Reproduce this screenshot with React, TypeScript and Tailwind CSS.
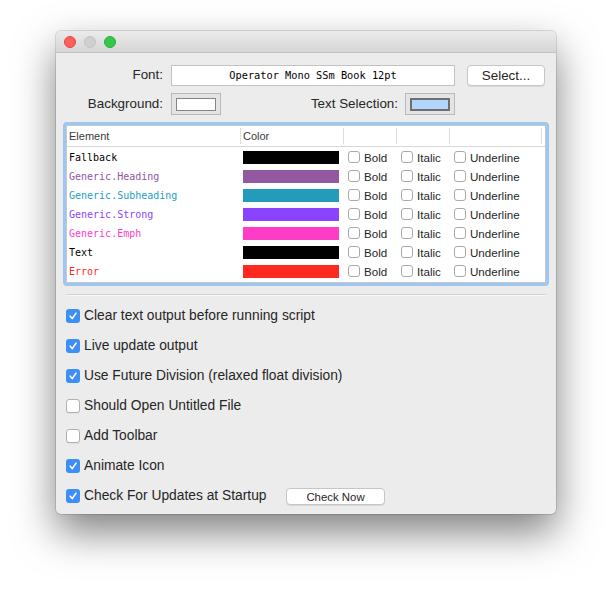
import React from 'react'

const sans = { fontFamily: '"Liberation Sans", Arial, sans-serif' }
const mono = { fontFamily: '"DejaVu Sans Mono", "Liberation Mono", monospace' }

const styles = [
  { name: 'Fallback', text: 'text-black', swatch: 'bg-black' },
  { name: 'Generic.Heading', text: 'text-[#9255a2]', swatch: 'bg-[#9359a0]' },
  { name: 'Generic.Subheading', text: 'text-[#22a0be]', swatch: 'bg-[#229cb9]' },
  { name: 'Generic.Strong', text: 'text-[#8a44ff]', swatch: 'bg-[#8a44fd]' },
  { name: 'Generic.Emph', text: 'text-[#ff3cc8]', swatch: 'bg-[#ff3cc7]' },
  { name: 'Text', text: 'text-black', swatch: 'bg-black' },
  { name: 'Error', text: 'text-[#ff2a1f]', swatch: 'bg-[#ff2a1f]' },
]

const options = [
  { label: 'Clear text output before running script', on: true },
  { label: 'Live update output', on: true },
  { label: 'Use Future Division (relaxed float division)', on: true },
  { label: 'Should Open Untitled File', on: false },
  { label: 'Add Toolbar', on: false },
  { label: 'Animate Icon', on: true },
  { label: 'Check For Updates at Startup', on: true, button: true },
]

function SmallBox() {
  return <span className="h-[12px] w-[12px] shrink-0 rounded-[3px] border border-[#a9a9a9] bg-white" />
}

function Check({ on }: { on: boolean }) {
  if (!on)
    return <span className="h-[14px] w-[14px] shrink-0 rounded-[3px] border border-[#b0b0b0] bg-white shadow-[0_1px_0_rgba(0,0,0,0.05)]" />
  return (
    <span className="flex h-[14px] w-[14px] shrink-0 items-center justify-center rounded-[3px] bg-[#3d8ef7]">
      <svg width="10" height="10" viewBox="0 0 10 10">
        <path d="M2.2 5.2 L4.2 7.6 L8 2.2" fill="none" stroke="white" strokeWidth="1.6" strokeLinecap="round" strokeLinejoin="round" />
      </svg>
    </span>
  )
}

function Well({ fill, thick }: { fill: string; thick?: boolean }) {
  return (
    <div className="flex h-[22px] w-[50px] items-center justify-center border border-[#b9b9b9] bg-[#e4e4e4]">
      <div className={`h-[13px] w-[40px] ${fill} ${thick ? 'border-2 border-[#6f6f6f]' : 'border border-[#858585]'}`} />
    </div>
  )
}

export default function App() {
  return (
    <div className="min-h-[594px] w-[612px] bg-white pl-[56px] pt-[31px] text-[#262626]" style={sans}>
      <div className="w-[500px] overflow-hidden rounded-[5px] bg-[#ececec] shadow-[0_18px_40px_rgba(0,0,0,0.5),0_0_0_1px_rgba(0,0,0,0.12)]">
        <div className="flex h-[22px] items-center gap-[8px] border-b border-[#c2c2c2] bg-gradient-to-b from-[#ebebeb] to-[#d6d6d6] pl-[8px]">
          <span className="h-[12px] w-[12px] rounded-full border border-[#e2463f] bg-[#fc605c]" />
          <span className="h-[12px] w-[12px] rounded-full border border-[#c4c4c4] bg-[#d0d0d0]" />
          <span className="h-[12px] w-[12px] rounded-full border border-[#2dac3a] bg-[#34c84a]" />
        </div>

        <div className="h-[461px] pt-[12px]">
          <div className="flex h-[21px] items-center text-[13.4px]">
            <div className="w-[107px] text-right">Font:</div>
            <div className="ml-[8px] flex h-[21px] w-[284px] items-center justify-center border border-[#c3c3c3] bg-white text-[10.3px] text-black" style={mono}>
              Operator Mono SSm Book 12pt
            </div>
            <button className="ml-[12px] h-[21px] w-[78px] rounded-[4px] border border-[#c6c6c6] bg-white text-[13.4px] shadow-[0_1px_0_rgba(0,0,0,0.08)]">
              Select...
            </button>
          </div>

          <div className="mt-[7px] flex h-[22px] items-center text-[13.4px]">
            <div className="w-[107px] text-right">Background:</div>
            <div className="ml-[8px]">
              <Well fill="bg-white" />
            </div>
            <div className="w-[177px] text-right">Text Selection:</div>
            <div className="ml-[7px]">
              <Well fill="bg-[#b1d5fd]" thick />
            </div>
          </div>

          <div className="ml-[7px] mt-[7px] h-[164px] w-[486px] rounded-[4px] border-[3px] border-[#9ec6f3]">
            <div className="h-full border border-[#c8c8c8] bg-white">
              <div className="flex h-[21px] items-center border-b border-[#d8d8d8] text-[11px] text-[#3a3a3a]">
                <div className="w-[173px] pl-[2px]">Element</div>
                <div className="h-[16px] w-[103px] border-l border-[#dddddd] pl-[2px] leading-[16px]">Color</div>
                <div className="h-[16px] w-[53px] border-l border-[#dddddd]" />
                <div className="h-[16px] w-[53px] border-l border-[#dddddd]" />
                <div className="h-[16px] w-[93px] border-x border-[#dddddd]" />
              </div>
              <div className="pt-[1px]">
                {styles.map((s) => (
                  <div key={s.name} className="flex h-[19px] items-center text-[11.6px]">
                    <div className={`w-[173px] pl-[2px] text-[10px] ${s.text}`} style={mono}>
                      {s.name}
                    </div>
                    <div className="w-[103px] pl-[3px]">
                      <div className={`h-[13px] w-[96px] ${s.swatch}`} />
                    </div>
                    <div className="flex w-[53px] items-center gap-[4px] pl-[5px]">
                      <SmallBox />
                      <span>Bold</span>
                    </div>
                    <div className="flex w-[53px] items-center gap-[4px] pl-[5px]">
                      <SmallBox />
                      <span>Italic</span>
                    </div>
                    <div className="flex w-[93px] items-center gap-[4px] pl-[5px]">
                      <SmallBox />
                      <span>Underline</span>
                    </div>
                  </div>
                ))}
              </div>
            </div>
          </div>

          <div className="ml-[10px] mt-[8px] h-[2px] w-[480px] border-b border-t border-b-[#f8f8f8] border-t-[#d2d2d2]" />

          <div className="mt-[13px] flex flex-col gap-[16px] pl-[10px] text-[13.8px]">
            {options.map((o) => (
              <div key={o.label} className="flex h-[14px] items-center">
                <Check on={o.on} />
                <span className="ml-[4px]">{o.label}</span>
                {o.button && (
                  <button className="ml-auto mr-[171px] h-[17px] w-[99px] rounded-[4px] border border-[#c6c6c6] bg-white text-[11.4px] shadow-[0_1px_0_rgba(0,0,0,0.08)]">
                    Check Now
                  </button>
                )}
              </div>
            ))}
          </div>
        </div>
      </div>
    </div>
  )
}
